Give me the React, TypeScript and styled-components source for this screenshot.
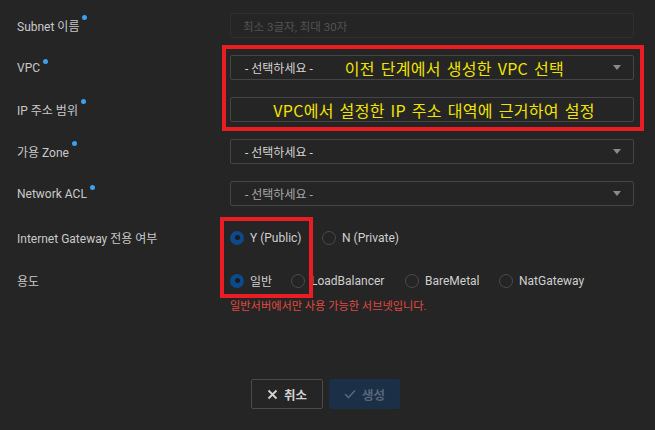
import React from "react";
import styled, { createGlobalStyle } from "styled-components";

const Global = createGlobalStyle`
  html, body { margin: 0; padding: 0; background: #252525; }
  body { font-family: Roboto, "Noto Sans CJK KR", sans-serif; }
  * { box-sizing: border-box; }
`;

const Page = styled.div`
  position: relative;
  width: 655px;
  height: 430px;
  background: #252525;
  padding-top: 13px;
`;

const Form = styled.div`
  display: flex;
  flex-direction: column;
`;

const Row = styled.div<{ $h?: number; $mb?: number }>`
  display: flex;
  align-items: center;
  height: ${(p) => p.$h ?? 25}px;
  margin-bottom: ${(p) => p.$mb ?? 17}px;
`;

const Label = styled.div`
  width: 230px;
  padding-left: 17px;
  font-size: 12px;
  color: #c9c9c9;
  display: flex;
  align-items: flex-start;
`;

const Dot = styled.span`
  width: 5px;
  height: 5px;
  border-radius: 50%;
  background: #3d9ff0;
  margin-left: 3px;
  margin-top: -2px;
`;

const Field = styled.div<{ $dim?: boolean; $center?: boolean }>`
  width: 404px;
  height: 25px;
  border: 1px solid ${(p) => (p.$dim ? "#2f2f2f" : "#454545")};
  border-radius: 2px;
  display: flex;
  align-items: center;
  justify-content: ${(p) => (p.$center ? "center" : "flex-start")};
  padding: 0 10px 0 14px;
  font-size: 12px;
  color: #c9c9c9;
  position: relative;
`;

const Placeholder = styled.span`
  color: #535353;
  font-size: 11.5px;
  margin-left: -2px;
`;

const SelectText = styled.span<{ $muted?: boolean }>`
  color: ${(p) => (p.$muted ? "#a8a8a8" : "#d4d4d4")};
  font-size: 12px;
`;

const Note = styled.span`
  color: #f2e400;
  font-family: "Noto Sans CJK KR", sans-serif;
  font-size: 16px;
  letter-spacing: 0.3px;
  word-spacing: 2px;
`;

const SelectNote = styled(Note)`
  margin-left: 32px;
`;

const Arrow = styled.span`
  margin-left: auto;
  width: 0;
  height: 0;
  border-left: 4px solid transparent;
  border-right: 4px solid transparent;
  border-top: 5px solid #8a8a8a;
  margin-right: 2px;
`;

const Radios = styled.div`
  display: flex;
  align-items: center;
`;

const RadioItem = styled.label<{ $w: number }>`
  display: flex;
  align-items: center;
  width: ${(p) => p.$w}px;
  font-size: 12px;
  color: #cfcfcf;
`;

const Circle = styled.span<{ $on?: boolean }>`
  width: 14px;
  height: 14px;
  border-radius: 50%;
  margin-right: 6px;
  flex: none;
  ${(p) =>
    p.$on
      ? `background: #0c4a8c; display:flex; align-items:center; justify-content:center;
         &::after { content:""; width:5px; height:5px; border-radius:50%; background:#1b1b1b; }`
      : `border: 1px solid #4a4a4a;`}
`;

const ErrorText = styled.div`
  margin-left: 230px;
  margin-top: -13px;
  font-size: 11.2px;
  color: #e0493f;
`;

const Buttons = styled.div`
  display: flex;
  gap: 6px;
  margin-left: 251px;
  margin-top: 66px;
`;

const Btn = styled.button<{ $primary?: boolean }>`
  width: ${(p) => (p.$primary ? 71 : 72)}px;
  height: 30px;
  border-radius: 2px;
  border: 1px solid ${(p) => (p.$primary ? "#1b2f47" : "#4a4a4a")};
  background: ${(p) => (p.$primary ? "#1b2f47" : "transparent")};
  color: ${(p) => (p.$primary ? "#56657a" : "#d2d2d2")};
  font-family: Roboto, "Noto Sans CJK KR", sans-serif;
  font-size: 12.5px;
  font-weight: 700;
  display: flex;
  align-items: center;
  justify-content: center;
  gap: 6px;
  padding: 0;
`;

const Annot = styled.div<{ $x: number; $y: number; $w: number; $h: number }>`
  position: absolute;
  left: ${(p) => p.$x}px;
  top: ${(p) => p.$y}px;
  width: ${(p) => p.$w}px;
  height: ${(p) => p.$h}px;
  border: 4px solid #ea1c24;
  pointer-events: none;
`;

const Req = ({ children }: { children: React.ReactNode }) => (
  <Label>
    {children}
    <Dot />
  </Label>
);

export default function App() {
  return (
    <Page>
      <Global />
      <Form>
        <Row>
          <Req>Subnet 이름</Req>
          <Field $dim>
            <Placeholder>최소 3글자, 최대 30자</Placeholder>
          </Field>
        </Row>
        <Row>
          <Req>VPC</Req>
          <Field>
            <SelectText>- 선택하세요 -</SelectText>
            <SelectNote>이전 단계에서 생성한 VPC 선택</SelectNote>
            <Arrow />
          </Field>
        </Row>
        <Row>
          <Req>IP 주소 범위</Req>
          <Field $center>
            <Note>VPC에서 설정한 IP 주소 대역에 근거하여 설정</Note>
          </Field>
        </Row>
        <Row>
          <Req>가용 Zone</Req>
          <Field>
            <SelectText>- 선택하세요 -</SelectText>
            <Arrow />
          </Field>
        </Row>
        <Row $mb={19}>
          <Req>Network ACL</Req>
          <Field>
            <SelectText $muted>- 선택하세요 -</SelectText>
            <Arrow />
          </Field>
        </Row>
        <Row $mb={18}>
          <Label>Internet Gateway 전용 여부</Label>
          <Radios>
            <RadioItem $w={92}>
              <Circle $on />Y (Public)
            </RadioItem>
            <RadioItem $w={100}>
              <Circle />N (Private)
            </RadioItem>
          </Radios>
        </Row>
        <Row>
          <Label>용도</Label>
          <Radios>
            <RadioItem $w={61}>
              <Circle $on />일반
            </RadioItem>
            <RadioItem $w={114}>
              <Circle />LoadBalancer
            </RadioItem>
            <RadioItem $w={94}>
              <Circle />BareMetal
            </RadioItem>
            <RadioItem $w={100}>
              <Circle />NatGateway
            </RadioItem>
          </Radios>
        </Row>
        <ErrorText>일반서버에서만 사용 가능한 서브넷입니다.</ErrorText>
        <Buttons>
          <Btn>
            <svg width="11" height="11" viewBox="0 0 11 11">
              <path d="M1.5 1.5 L9.5 9.5 M9.5 1.5 L1.5 9.5" stroke="#d2d2d2" strokeWidth="1.8" />
            </svg>
            취소
          </Btn>
          <Btn $primary>
            <svg width="12" height="10" viewBox="0 0 12 10">
              <path d="M1 5 L4.5 8.5 L11 1.5" stroke="#56657a" strokeWidth="1.6" fill="none" />
            </svg>
            생성
          </Btn>
        </Buttons>
      </Form>
      <Annot $x={222} $y={45} $w={422} $h={86} />
      <Annot $x={220} $y={217} $w={93} $h={81} />
    </Page>
  );
}
